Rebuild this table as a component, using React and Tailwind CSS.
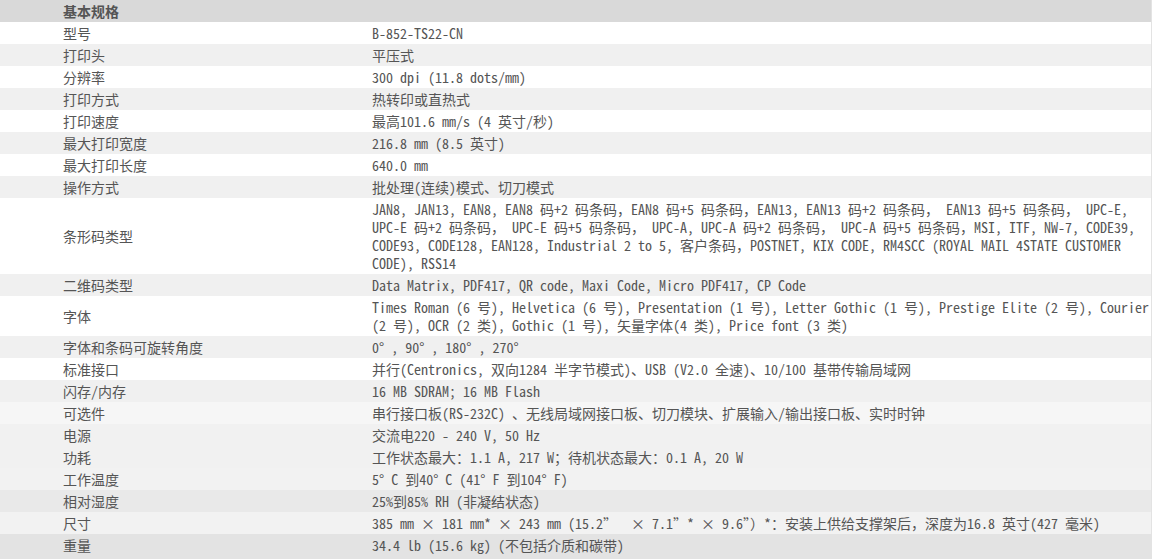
const specs = [
  { label: '型号', value: 'B-852-TS22-CN', bg: 'bg-white' },
  { label: '打印头', value: '平压式', bg: 'bg-[#f0f0f0]' },
  { label: '分辨率', value: '300 dpi (11.8 dots/mm)', bg: 'bg-white' },
  { label: '打印方式', value: '热转印或直热式', bg: 'bg-[#f0f0f0]' },
  { label: '打印速度', value: '最高101.6 mm/s (4 英寸/秒)', bg: 'bg-white' },
  { label: '最大打印宽度', value: '216.8 mm (8.5 英寸)', bg: 'bg-[#f0f0f0]' },
  { label: '最大打印长度', value: '640.0 mm', bg: 'bg-white' },
  { label: '操作方式', value: '批处理(连续)模式、切刀模式', bg: 'bg-[#f0f0f0]' },
  {
    label: '条形码类型',
    value: [
      'JAN8, JAN13, EAN8, EAN8 码+2 码条码，EAN8 码+5 码条码，EAN13, EAN13 码+2 码条码， EAN13 码+5 码条码， UPC-E,',
      'UPC-E 码+2 码条码， UPC-E 码+5 码条码， UPC-A, UPC-A 码+2 码条码， UPC-A 码+5 码条码，MSI, ITF, NW-7, CODE39,',
      'CODE93, CODE128, EAN128, Industrial 2 to 5, 客户条码，POSTNET, KIX CODE, RM4SCC (ROYAL MAIL 4STATE CUSTOMER',
      'CODE), RSS14',
    ],
    bg: 'bg-white',
  },
  { label: '二维码类型', value: 'Data Matrix, PDF417, QR code, Maxi Code, Micro PDF417, CP Code', bg: 'bg-[#f0f0f0]' },
  {
    label: '字体',
    value: [
      'Times Roman (6 号), Helvetica (6 号), Presentation (1 号), Letter Gothic (1 号), Prestige Elite (2 号), Courier',
      '(2 号), OCR (2 类), Gothic (1 号), 矢量字体(4 类), Price font (3 类)',
    ],
    bg: 'bg-white',
  },
  { label: '字体和条码可旋转角度', value: '0° , 90° , 180° , 270°', bg: 'bg-[#f0f0f0]' },
  { label: '标准接口', value: '并行(Centronics, 双向1284 半字节模式)、USB (V2.0 全速)、10/100 基带传输局域网', bg: 'bg-white' },
  { label: '闪存/内存', value: '16 MB SDRAM; 16 MB Flash', bg: 'bg-[#f0f0f0]' },
  { label: '可选件', value: '串行接口板(RS-232C) 、无线局域网接口板、切刀模块、扩展输入/输出接口板、实时时钟', bg: 'bg-[#f6f6f6]' },
  { label: '电源', value: '交流电220 - 240 V, 50 Hz', bg: 'bg-[#f1f1f1]' },
  { label: '功耗', value: '工作状态最大：1.1 A, 217 W；待机状态最大：0.1 A, 20 W', bg: 'bg-[#f1f1f1]' },
  { label: '工作温度', value: '5° C 到40° C (41° F 到104° F)', bg: 'bg-[#f2f2f2]' },
  { label: '相对湿度', value: '25%到85% RH (非凝结状态)', bg: 'bg-[#e9e9e9]' },
  {
    label: '尺寸',
    value: '385 mm × 181 mm* × 243 mm (15.2”  × 7.1”* × 9.6”）*：安装上供给支撑架后，深度为16.8 英寸(427 毫米)',
    bg: 'bg-[#f2f2f2]',
  },
  { label: '重量', value: '34.4 lb (15.6 kg) (不包括介质和碳带)', bg: 'bg-[#e3e3e3]' },
]

export default function App() {
  return (
    <div className="min-h-[559px] bg-[#e3e3e3]">
      <div
        className="w-[1151px] bg-white text-[14px] leading-[18px] text-[#555]"
        style={{ fontFamily: '"Noto Sans Mono CJK SC", "Liberation Mono", "Noto Sans CJK SC", monospace' }}
      >
        <div className="flex bg-[#d9d9d9] py-[2px]">
          <div className="w-[360px] shrink-0 pl-[63px] font-bold">基本规格</div>
          <div className="flex-1 pl-[12px]"></div>
        </div>
        {specs.map((s) => (
          <div key={s.label} className={`flex items-center py-[2px] ${s.bg}`}>
            <div className="w-[360px] shrink-0 pl-[63px]">{s.label}</div>
            <div className="flex-1 pl-[12px] whitespace-pre">
              {Array.isArray(s.value)
                ? s.value.map((line) => <div key={line}>{line}</div>)
                : s.value}
            </div>
          </div>
        ))}
      </div>
    </div>
  )
}
